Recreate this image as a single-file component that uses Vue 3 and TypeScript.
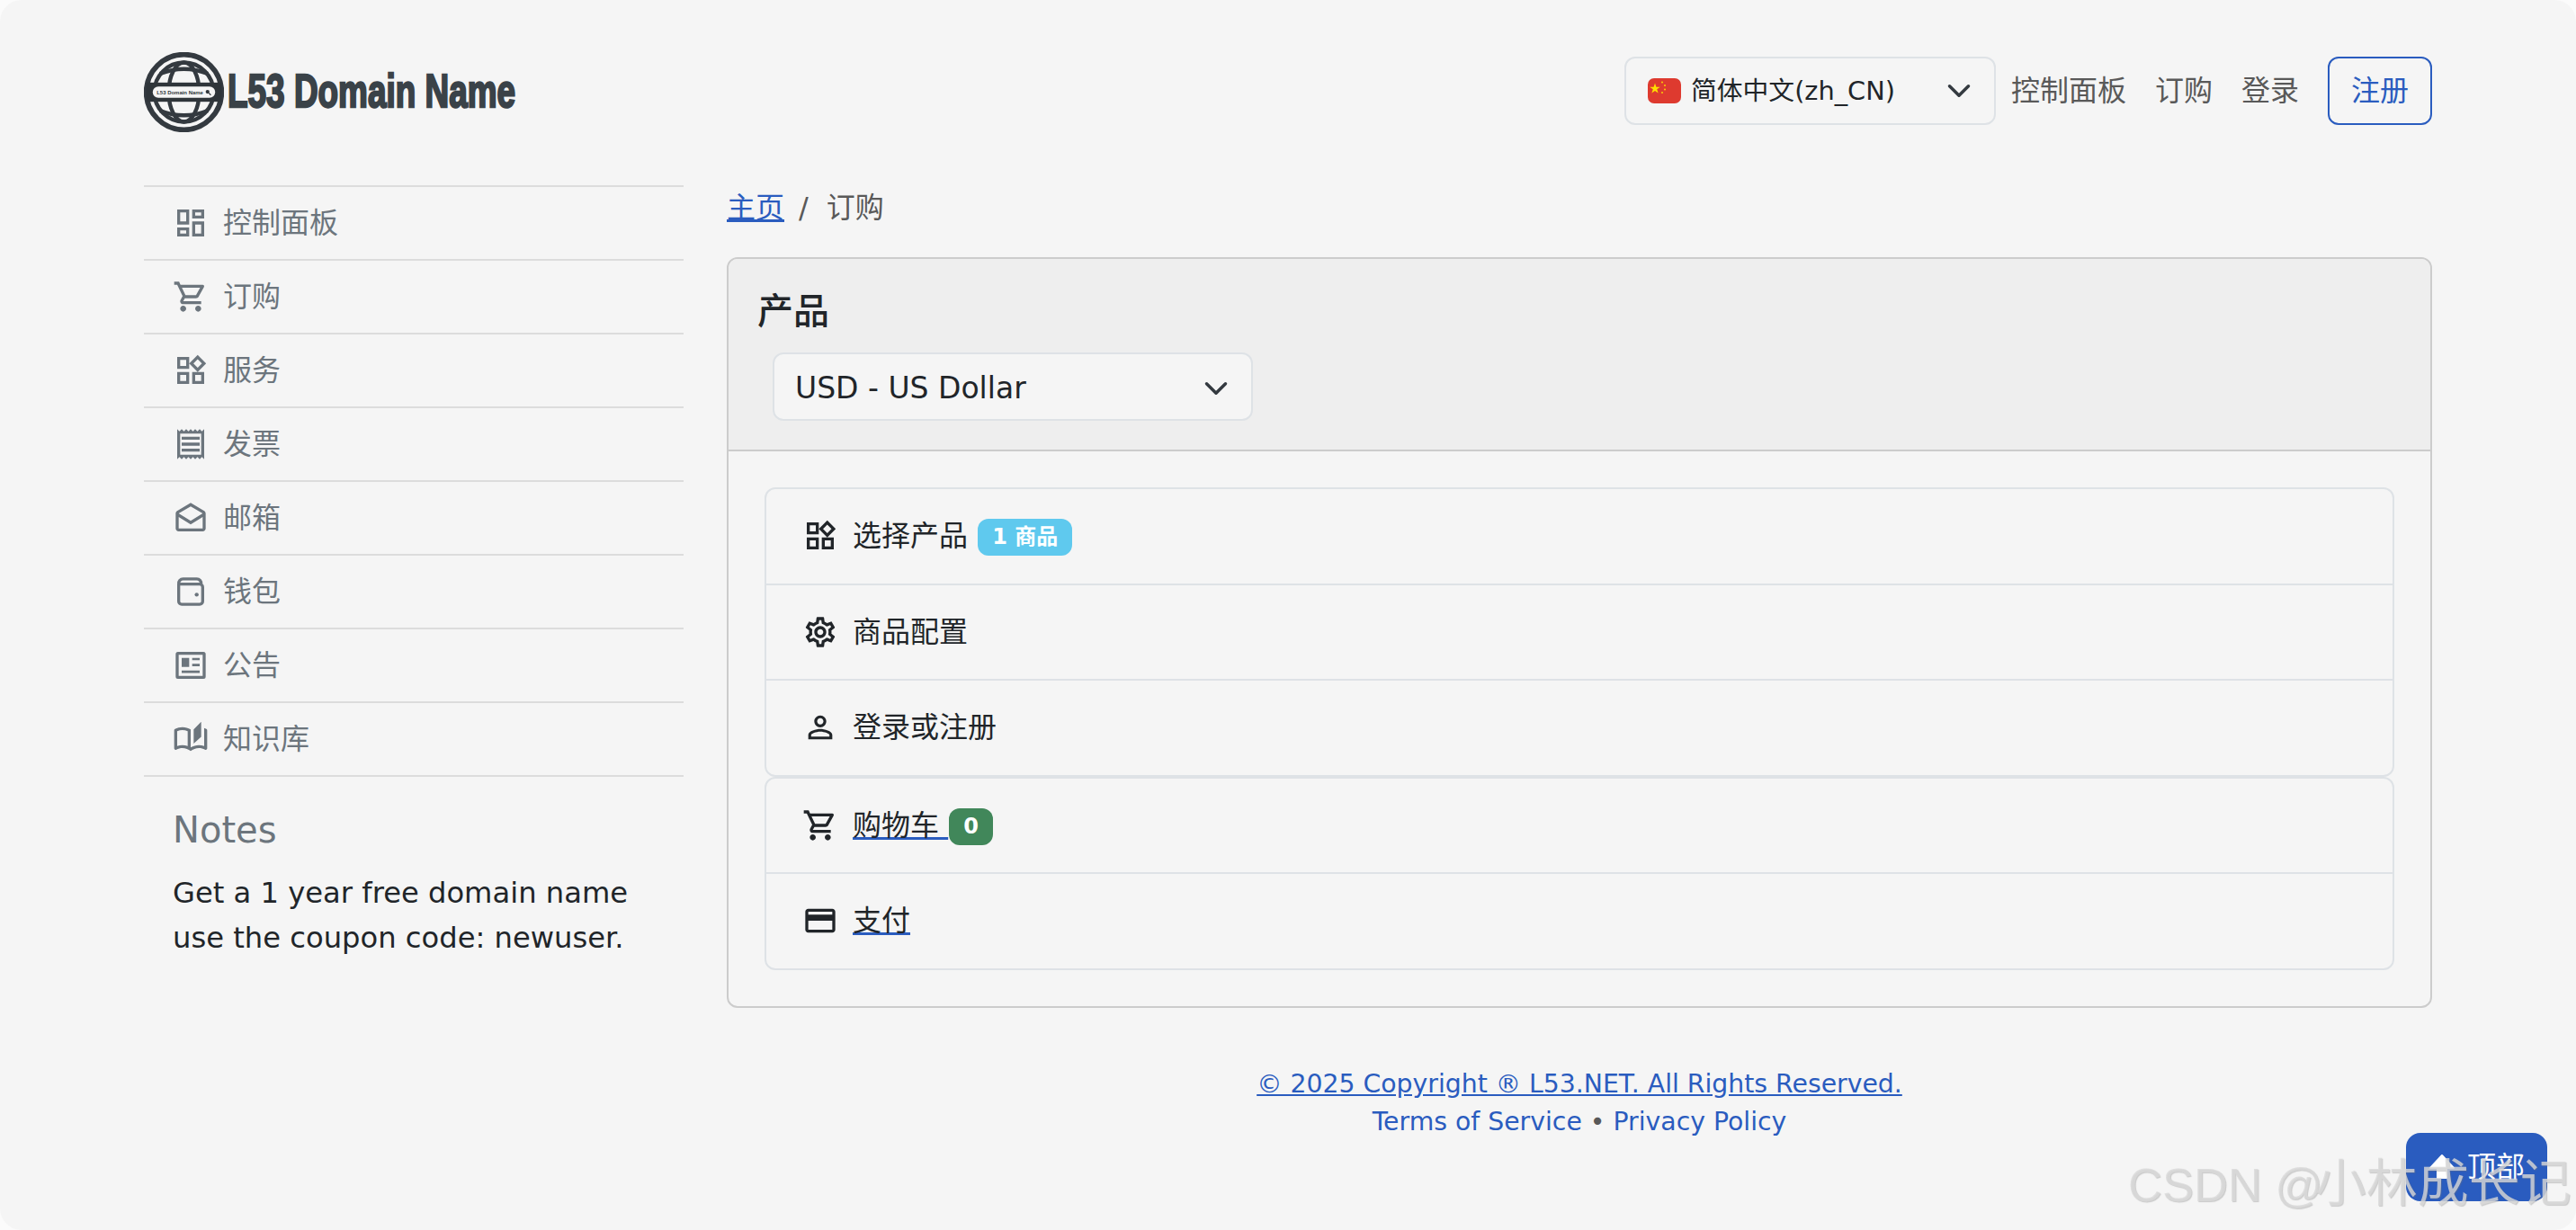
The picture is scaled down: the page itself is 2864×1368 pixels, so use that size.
<script setup lang="ts">
interface Icon { d: string; s?: string; dot?: boolean }

const icons: Record<string, Icon> = {
  dashboard: { d: 'M19 5v2h-4V5h4M9 5v6H5V5h4m10 8v6h-4v-6h4M9 17v2H5v-2h4M21 3h-8v6h8V3zM11 3H3v10h8V3zm10 8h-8v10h8V11zm-10 4H3v6h8v-6z' },
  cart: { d: 'M15.55 13c.75 0 1.41-.41 1.75-1.03l3.58-6.49c.37-.66-.11-1.48-.87-1.48H5.21l-.94-2H1v2h2l3.6 7.59-1.35 2.44C4.52 15.37 5.48 17 7 17h12v-2H7l1.1-2h7.45zM6.16 6h12.15l-2.76 5H8.53L6.16 6zM7 18c-1.1 0-1.99.9-1.99 2S5.9 22 7 22s2-.9 2-2-.9-2-2-2zm10 0c-1.1 0-1.99.9-1.99 2s.89 2 1.99 2 2-.9 2-2-.9-2-2-2z' },
  widgets: { d: 'M16.66 4.52l2.83 2.83-2.83 2.83-2.83-2.83 2.83-2.83M9 5v4H5V5h4m10 10v4h-4v-4h4M9 15v4H5v-4h4m7.66-13.31L11 7.34 16.66 13l5.66-5.66-5.66-5.65zM11 3H3v8h8V3zm10 10h-8v8h8v-8zm-10 0H3v8h8v-8z' },
  receipt: { d: 'M19.5 3.5L18 2l-1.5 1.5L15 2l-1.5 1.5L12 2l-1.5 1.5L9 2 7.5 3.5 6 2 4.5 3.5 3 2v20l1.5-1.5L6 22l1.5-1.5L9 22l1.5-1.5L12 22l1.5-1.5L15 22l1.5-1.5L18 22l1.5-1.5L21 22V2l-1.5 1.5zM19 19.09H5V4.91h14v14.18zM6 15h12v2H6zm0-4h12v2H6zm0-4h12v2H6z' },
  drafts: { d: 'M21.99 9c0-.72-.37-1.35-.94-1.7L12 2 2.95 7.3C2.38 7.65 2 8.28 2 9v10c0 1.1.9 2 2 2h16c1.1 0 2-.9 2-2l-.01-10zm-2 0v.01L12 14 4 9l8-4.68L19.99 9zM4 19v-7.66l8 5.02 7.99-4.99L20 19H4z' },
  wallet: { d: '', s: 'M6 20.5h12a2 2 0 0 0 2-2V9a2 2 0 0 0-2-2H4M4 7v11.5a2 2 0 0 0 2 2M4 7a3 3 0 0 1 3-3.5h9a3 3 0 0 1 3 3.5', dot: true },
  news: { d: 'M3.5 3h17A1.5 1.5 0 0 1 22 4.5v15a1.5 1.5 0 0 1-1.5 1.5h-17A1.5 1.5 0 0 1 2 19.5v-15A1.5 1.5 0 0 1 3.5 3zM4 5v14h16V5zM6 7h5v6H6zM13 7h5v1.6h-5zM13 11h5v1.6h-5zM6 15.5h12v1.6H6z' },
  book: { d: 'M22.47 5.2C22 4.96 21.51 4.76 21 4.59v12.03C19.86 16.21 18.69 16 17.5 16c-1.9 0-3.78.54-5.5 1.58V5.48C10.38 4.55 8.51 4 6.5 4 4.71 4 3.02 4.44 1.53 5.2 1.2 5.36 1 5.71 1 6.08v12.08c0 .58.47.99 1 .99.16 0 .32-.04.48-.12C3.69 18.4 5.05 18 6.5 18c2.07 0 3.98.82 5.5 2 1.52-1.18 3.43-2 5.5-2 1.45 0 2.81.4 4.02 1.04.16.08.32.12.48.12.52 0 1-.41 1-.99V6.08c0-.37-.2-.72-.53-.88zM10 16.62C8.86 16.21 7.69 16 6.5 16c-1.19 0-2.36.21-3.5.62V6.71C4.11 6.24 5.28 6 6.5 6c1.2 0 2.39.25 3.5.72v9.9zM19 .5l-5 5V15l5-4.5V.5z' },
  settings: { d: 'M19.43 12.98c.04-.32.07-.64.07-.98 0-.34-.03-.66-.07-.98l2.11-1.65c.19-.15.24-.42.12-.64l-2-3.46c-.09-.16-.26-.25-.44-.25-.06 0-.12.01-.17.03l-2.49 1c-.52-.4-1.08-.73-1.69-.98l-.38-2.65C14.46 2.18 14.25 2 14 2h-4c-.25 0-.46.18-.49.42l-.38 2.65c-.61.25-1.17.59-1.69.98l-2.49-1c-.06-.02-.12-.03-.18-.03-.17 0-.34.09-.43.25l-2 3.46c-.13.22-.07.49.12.64l2.11 1.65c-.04.32-.07.65-.07.98 0 .33.03.66.07.98l-2.11 1.65c-.19.15-.24.42-.12.64l2 3.46c.09.16.26.25.44.25.06 0 .12-.01.17-.03l2.49-1c.52.4 1.08.73 1.69.98l.38 2.65c.03.24.24.42.49.42h4c.25 0 .46-.18.49-.42l.38-2.65c.61-.25 1.17-.59 1.69-.98l2.49 1c.06.02.12.03.18.03.17 0 .34-.09.43-.25l2-3.46c.12-.22.07-.49-.12-.64l-2.11-1.65zm-1.98-1.71c.04.31.05.52.05.73 0 .21-.02.43-.05.73l-.14 1.13.89.7 1.08.84-.7 1.21-1.27-.51-1.04-.42-.9.68c-.43.32-.84.56-1.25.73l-1.06.43-.16 1.13-.2 1.35h-1.4l-.19-1.35-.16-1.13-1.06-.43c-.43-.18-.83-.41-1.23-.71l-.91-.7-1.06.43-1.27.51-.7-1.21 1.08-.84.89-.7-.14-1.13c-.03-.31-.05-.54-.05-.74s.02-.43.05-.73l.14-1.13-.89-.7-1.08-.84.7-1.21 1.27.51 1.04.42.9-.68c.43-.32.84-.56 1.25-.73l1.06-.43.16-1.13.2-1.35h1.39l.19 1.35.16 1.13 1.06.43c.43.18.83.41 1.23.71l.91.7 1.06-.43 1.27-.51.7 1.21-1.07.85-.89.7.14 1.13zM12 8c-2.21 0-4 1.79-4 4s1.79 4 4 4 4-1.79 4-4-1.79-4-4-4zm0 6c-1.1 0-2-.9-2-2s.9-2 2-2 2 .9 2 2-.9 2-2 2z' },
  person: { d: 'M12 5.9c1.16 0 2.1.94 2.1 2.1s-.94 2.1-2.1 2.1S9.9 9.16 9.9 8s.94-2.1 2.1-2.1m0 9c2.97 0 6.1 1.46 6.1 2.1v1.1H5.9V17c0-.64 3.13-2.1 6.1-2.1M12 4C9.79 4 8 5.79 8 8s1.79 4 4 4 4-1.79 4-4-1.79-4-4-4zm0 9c-2.67 0-8 1.34-8 4v3h16v-3c0-2.66-5.33-4-8-4z' },
  card: { d: 'M20 4H4c-1.11 0-1.99.89-1.99 2L2 18c0 1.11.89 2 2 2h16c1.11 0 2-.89 2-2V6c0-1.11-.89-2-2-2zm0 14H4v-6h16v6zm0-10H4V6h16v2z' },
}

const sidebar = [
  { icon: 'dashboard', label: '控制面板' },
  { icon: 'cart', label: '订购' },
  { icon: 'widgets', label: '服务' },
  { icon: 'receipt', label: '发票' },
  { icon: 'drafts', label: '邮箱' },
  { icon: 'wallet', label: '钱包' },
  { icon: 'news', label: '公告' },
  { icon: 'book', label: '知识库' },
]

const nav = ['控制面板', '订购', '登录']
</script>

<template>
  <div class="page">
    <header class="header">
      <a class="brand">
        <svg class="globe" viewBox="0 0 100 100">
          <circle cx="50" cy="50" r="47" fill="none" stroke="#343a40" stroke-width="6.5" />
          <circle cx="50" cy="50" r="37" fill="none" stroke="#343a40" stroke-width="5" />
          <ellipse cx="50" cy="50" rx="19" ry="37" fill="none" stroke="#343a40" stroke-width="5" />
          <path d="M20 27q30 -12 60 0M20 73q30 12 60 0" fill="none" stroke="#343a40" stroke-width="5" />
          <rect x="3" y="38" width="94" height="24" fill="#2f353a" />
          <rect x="11" y="43" width="78" height="14" rx="7" fill="#f5f5f5" />
          <text x="16" y="52.8" class="globe-text" textLength="58" lengthAdjust="spacingAndGlyphs">L53 Domain Name</text>
          <circle cx="79.5" cy="49.5" r="2.4" fill="#2f353a" />
          <path d="M81 51l2.6 2.6" stroke="#2f353a" stroke-width="1.4" />
        </svg>
        <span class="brand-name">L53 Domain Name</span>
      </a>
      <nav class="top-nav">
        <div class="lang">
          <svg class="flag" viewBox="0 0 37 28">
            <rect width="37" height="28" rx="7" fill="#de3a2f" />
            <path d="M8 5.5l1.4 4.2h4.4l-3.6 2.6 1.4 4.2L8 13.9l-3.6 2.6 1.4-4.2-3.6-2.6h4.4z" fill="#ffde00" />
            <circle cx="16" cy="4.5" r=".9" fill="#ffde00" />
            <circle cx="19" cy="8" r=".9" fill="#ffde00" />
            <circle cx="19" cy="12.5" r=".9" fill="#ffde00" />
            <circle cx="16" cy="16" r=".9" fill="#ffde00" />
          </svg>
          <span class="lang-text">简体中文(zh_CN)</span>
          <svg class="chev" viewBox="0 0 16 16"><path d="m2 5 6 6 6-6" /></svg>
        </div>
        <a v-for="n in nav" :key="n" class="nav-link">{{ n }}</a>
        <a class="register">注册</a>
      </nav>
    </header>

    <div class="layout">
      <aside class="side">
        <ul class="side-list">
          <li v-for="item in sidebar" :key="item.label" class="side-item">
            <svg class="ico" viewBox="0 0 24 24">
              <path v-if="icons[item.icon].d" :d="icons[item.icon].d" fill="currentColor" fill-rule="evenodd" />
              <path v-if="icons[item.icon].s" :d="icons[item.icon].s" fill="none" stroke="currentColor" stroke-width="2" />
              <circle v-if="icons[item.icon].dot" cx="16" cy="14" r="1.3" fill="currentColor" />
            </svg>
            <span>{{ item.label }}</span>
          </li>
        </ul>
        <div class="notes">
          <h4>Notes</h4>
          <p>Get a 1 year free domain name<br />use the coupon code: newuser.</p>
        </div>
      </aside>

      <main class="main">
        <div class="crumbs">
          <a class="crumb-link">主页</a>
          <span class="crumb-sep">/</span>
          <span>订购</span>
        </div>

        <section class="card">
          <div class="card-head">
            <h5>产品</h5>
            <div class="currency">
              <span>USD - US Dollar</span>
              <svg class="chev" viewBox="0 0 16 16"><path d="m2 5 6 6 6-6" /></svg>
            </div>
          </div>
          <div class="card-body">
            <ul class="group">
              <li class="row">
                <svg class="ico" viewBox="0 0 24 24"><path :d="icons.widgets.d" fill="currentColor" fill-rule="evenodd" /></svg>
                <span>选择产品 <span class="badge info">1 商品</span></span>
              </li>
              <li class="row">
                <svg class="ico" viewBox="0 0 24 24"><path :d="icons.settings.d" fill="currentColor" /></svg>
                <span>商品配置</span>
              </li>
              <li class="row">
                <svg class="ico" viewBox="0 0 24 24"><path :d="icons.person.d" fill="currentColor" /></svg>
                <span>登录或注册</span>
              </li>
            </ul>
            <ul class="group">
              <li class="row">
                <svg class="ico" viewBox="0 0 24 24"><path :d="icons.cart.d" fill="currentColor" /></svg>
                <a class="row-link">购物车 <span class="badge ok">0</span></a>
              </li>
              <li class="row">
                <svg class="ico" viewBox="0 0 24 24"><path :d="icons.card.d" fill="currentColor" /></svg>
                <a class="row-link">支付</a>
              </li>
            </ul>
          </div>
        </section>

        <footer class="foot">
          <a class="foot-copy">© 2025 Copyright ® L53.NET. All Rights Reserved.</a>
          <div><a>Terms of Service</a> <span class="dot">•</span> <a>Privacy Policy</a></div>
        </footer>
      </main>
    </div>

    <a class="to-top">
      <svg viewBox="0 0 32 32"><path d="M16 3 L29 17 H21 V28 H11 V17 H3 Z" fill="#fff" stroke="#fff" stroke-width="2" stroke-linejoin="round" /></svg>
      <span>顶部</span>
    </a>
    <div class="watermark">CSDN @<span class="wm-cjk">小林成长记</span></div>
  </div>
</template>

<style>
html, body { background: #fbfbfb; margin: 0; }
</style>

<style scoped>
.page {
  box-sizing: border-box;
  min-height: 1368px;
  padding: 58px 160px 0;
  background: #f5f5f5;
  border-radius: 24px;
  overflow: hidden;
  color: #212529;
  font-family: "DejaVu Sans", "Noto Sans CJK SC", sans-serif;
  font-size: 32px;
  line-height: 48px;
}

ul { list-style: none; margin: 0; padding: 0; }

.header {
  display: flex;
  justify-content: space-between;
  align-items: center;
  height: 89px;
  margin-bottom: 59px;
}
.brand { display: flex; align-items: center; gap: 4px; }
.globe { width: 89px; height: 89px; flex: none; }
.globe-text {
  font-family: "Liberation Sans", sans-serif;
  font-weight: 700;
  font-size: 7px;
  fill: #2f353a;
}
.brand-name {
  display: inline-block;
  margin-top: -3px;
  font-family: "Liberation Sans", sans-serif;
  font-weight: 700;
  font-size: 52px;
  line-height: 60px;
  color: #3a4248;
  -webkit-text-stroke: 2.4px #3a4248;
  transform: scaleX(.71);
  transform-origin: left center;
  white-space: nowrap;
}

.top-nav { display: flex; align-items: center; margin-bottom: 3px; }
.lang {
  box-sizing: border-box;
  display: flex;
  align-items: center;
  width: 413px;
  height: 76px;
  margin-right: 1px;
  padding: 0 24px;
  border: 2px solid #dee2e6;
  border-radius: 12px;
  font-size: 28.8px;
}
.flag { width: 37px; height: 28px; flex: none; margin-right: 11px; }
.lang-text { flex: 1; white-space: nowrap; }
.chev { width: 28px; height: 28px; flex: none; margin-right: 1px; }
.chev path { fill: none; stroke: #343a40; stroke-width: 2; stroke-linecap: round; stroke-linejoin: round; }
.nav-link { padding: 0 16px; color: #595959; }
.register {
  box-sizing: border-box;
  height: 76px;
  margin-left: 16px;
  padding: 12px 24px;
  border: 2px solid #2a5cbf;
  border-radius: 12px;
  color: #2a5cbf;
}

.layout { display: flex; gap: 48px; align-items: flex-start; }

.side { width: 600px; flex: none; }
.side-list { border-top: 2px solid #dcdcdc; }
.side-item {
  display: flex;
  align-items: center;
  gap: 16px;
  height: 80px;
  padding-left: 32px;
  border-bottom: 2px solid #dcdcdc;
  color: #6c757d;
}
.ico { width: 40px; height: 40px; flex: none; display: block; }

.notes { padding: 35px 32px 0; }
.notes h4 {
  margin: 0 0 21px;
  font-size: 40px;
  font-weight: 400;
  line-height: 48px;
  color: #6c757d;
}
.notes p { margin: 0; font-size: 32.2px; line-height: 50px; }

.main { flex: 1; min-width: 0; }

.crumbs {
  display: flex;
  height: 48px;
  margin-bottom: 32px;
  line-height: 50px;
  color: #595959;
}
.crumb-link { color: #2a5cbf; text-decoration: underline; }
.crumb-sep { padding: 0 20px 0 16px; }

.card {
  border: 2px solid #ccc;
  border-radius: 12px;
  overflow: hidden;
}
.card-head {
  height: 212px;
  box-sizing: content-box;
  background: #eee;
  border-bottom: 2px solid #ccc;
  padding: 0 32px;
}
.card-head h5 {
  margin: 0;
  padding-top: 29px;
  font-size: 40px;
  line-height: 58px;
  font-weight: 500;
}
.currency {
  box-sizing: border-box;
  display: flex;
  justify-content: space-between;
  align-items: center;
  width: 534px;
  height: 76px;
  margin: 17px 0 0 17px;
  padding: 3px 24px 0 23px;
  background: #f5f5f5;
  border: 2px solid #dee2e6;
  border-radius: 12px;
  font-size: 33px;
}

.card-body { padding: 40px; }
.group {
  border: 2px solid #dee2e6;
  border-radius: 12px;
}
.row {
  display: flex;
  align-items: center;
  gap: 16px;
  box-sizing: border-box;
  height: 104.5px;
  padding-left: 40px;
}
.row + .row {
  box-sizing: content-box;
  height: 104.5px;
  border-top: 2px solid #dee2e6;
}
.row-link {
  color: #212529;
  text-decoration: underline;
  text-decoration-color: #2a5cbf;
}

.badge {
  display: inline-block;
  padding: 0 16px;
  height: 41px;
  line-height: 41px;
  border-radius: 12px;
  font-size: 24px;
  font-weight: 700;
  color: #fff;
  vertical-align: 2px;
}
.info { background: #5fc9ee; margin-left: 1px; }
.ok { background: #41875a; vertical-align: 2px; margin-left: 1px; }

.foot {
  margin-top: 64px;
  text-align: center;
  font-size: 28.3px;
  line-height: 42px;
  color: #2a5cbf;
}
.foot-copy { text-decoration: underline; }
.dot { color: #595959; }

.to-top {
  position: fixed;
  right: 32px;
  bottom: 32px;
  box-sizing: border-box;
  display: flex;
  align-items: center;
  gap: 12px;
  width: 157px;
  height: 76px;
  padding-left: 24px;
  background: #2a5cbf;
  border-radius: 16px;
  color: #fff;
}
.to-top svg { width: 32px; height: 32px; flex: none; }

.watermark {
  position: fixed;
  left: 2366px;
  top: 1281px;
  font-family: "Liberation Sans", "Noto Sans CJK SC", sans-serif;
  font-size: 52.5px;
  line-height: 70px;
  white-space: nowrap;
  color: rgba(218, 218, 218, .78);
  text-shadow: 1px 1px 1px rgba(120, 120, 120, .35);
  pointer-events: none;
}
.wm-cjk { margin-left: -9px; font-size: 57px; }
</style>
